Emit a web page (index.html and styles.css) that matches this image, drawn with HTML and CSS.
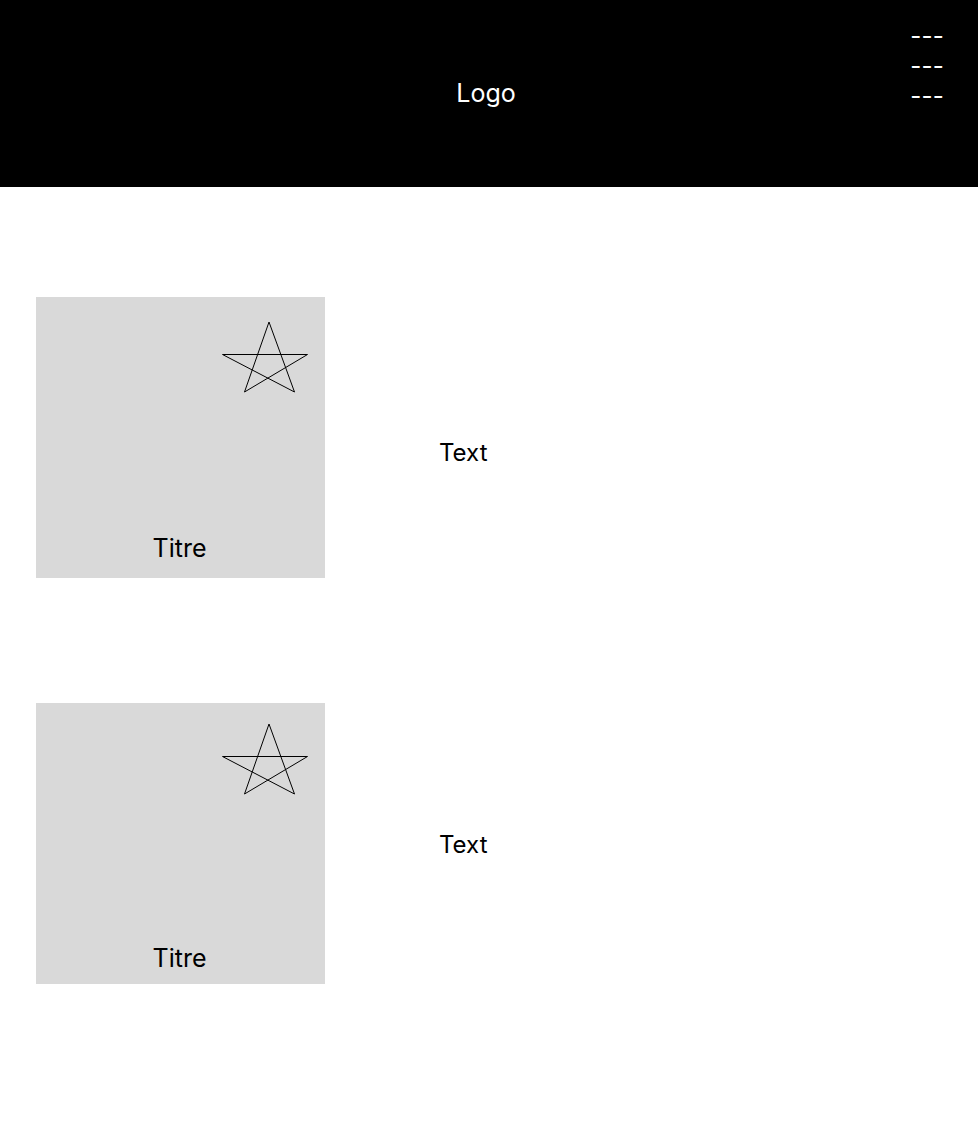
FILE: index.html
```html
<!DOCTYPE html>
<html lang="fr">
<head>
<meta charset="utf-8">
<title>Page</title>
<link rel="stylesheet" href="styles.css">
</head>
<body>
<header class="header">
  <div class="header-spacer"></div>
  <div class="logo">Logo</div>
  <nav class="menu">
    <span class="menu-line">---</span>
    <span class="menu-line">---</span>
    <span class="menu-line">---</span>
  </nav>
</header>
<main class="content">
  <section class="row row-first">
    <div class="card">
      <svg class="star" width="87" height="72" viewBox="0 0 87 72" aria-hidden="true">
        <polygon points="47,1 22.5,71 85.5,33.5 0.5,33.5 72.5,71" fill="none" stroke="#000" stroke-width="1"/>
      </svg>
      <div class="card-title">Titre</div>
    </div>
    <div class="row-text">Text</div>
  </section>
  <section class="row row-second">
    <div class="card card-alt">
      <svg class="star" width="87" height="72" viewBox="0 0 87 72" aria-hidden="true">
        <polygon points="47,1 22.5,71 85.5,33.5 0.5,33.5 72.5,71" fill="none" stroke="#000" stroke-width="1"/>
      </svg>
      <div class="card-title">Titre</div>
    </div>
    <div class="row-text">Text</div>
  </section>
</main>
</body>
</html>
```

FILE: styles.css
```css
* {
  box-sizing: border-box;
}

html, body {
  margin: 0;
  padding: 0;
  background: #fff;
}

body {
  font-family: Inter, "Liberation Sans", sans-serif;
  color: #000;
  width: 978px;
  height: 1125px;
  overflow: hidden;
}

.header {
  height: 187px;
  background: #000;
  color: #fff;
  display: grid;
  grid-template-columns: 1fr auto 1fr;
  padding: 0 34px 0 36px;
}

.logo {
  align-self: center;
  font-size: 25px;
  line-height: 30px;
  margin-left: -8px;
  margin-bottom: 2px;
}

.menu {
  justify-self: end;
  align-self: start;
  display: flex;
  flex-direction: column;
  padding-top: 21px;
}

.menu-line {
  font-size: 24px;
  line-height: 30px;
  height: 30px;
  letter-spacing: 0.01em;
}

.content {
  display: flex;
  flex-direction: column;
  padding: 110px 0 0 36px;
}

.row {
  display: flex;
  align-items: center;
}

.row-second {
  margin-top: 125px;
}

.card {
  width: 289px;
  height: 281px;
  background: #d9d9d9;
  display: flex;
  flex-direction: column;
  align-items: center;
  padding: 24px 16px 15px 0;
}

.card-alt {
  padding-top: 20px;
  padding-bottom: 11px;
}

.star {
  align-self: flex-end;
  display: block;
}

.card-title {
  margin-top: auto;
  font-size: 25px;
  line-height: 30px;
  padding-left: 14px;
}

.row-text {
  margin-left: 114px;
  font-size: 24px;
  line-height: 30px;
}

.row-first .row-text {
  margin-top: 30px;
}

.row-second .row-text {
  margin-top: 2px;
}
```
